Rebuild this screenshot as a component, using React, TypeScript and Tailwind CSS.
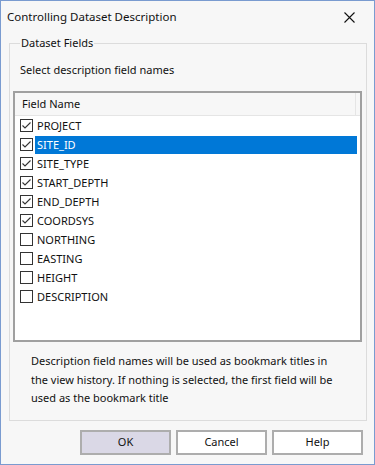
import React from "react";

const fields: { name: string; checked: boolean; selected?: boolean }[] = [
  { name: "PROJECT", checked: true },
  { name: "SITE_ID", checked: true, selected: true },
  { name: "SITE_TYPE", checked: true },
  { name: "START_DEPTH", checked: true },
  { name: "END_DEPTH", checked: true },
  { name: "COORDSYS", checked: true },
  { name: "NORTHING", checked: false },
  { name: "EASTING", checked: false },
  { name: "HEIGHT", checked: false },
  { name: "DESCRIPTION", checked: false },
];

function CheckBox({ checked }: { checked: boolean }) {
  return (
    <div className="w-[13px] h-[13px] border border-[#333333] bg-white flex items-center justify-center shrink-0">
      {checked && (
        <svg width="11" height="11" viewBox="0 0 11 11">
          <polyline points="1.5,5.5 4,8 9.5,2.5" fill="none" stroke="#333333" strokeWidth="1.1" />
        </svg>
      )}
    </div>
  );
}

function Button({ label, primary }: { label: string; primary?: boolean }) {
  return (
    <div
      className={`w-[91px] h-[25px] border-2 border-[#adadad] flex items-center justify-center text-[#111] ${
        primary ? "bg-[#dad8e6]" : "bg-white"
      }`}
    >
      {label}
    </div>
  );
}

export default function App() {
  return (
    <div
      className="w-[375px] h-[465px] border border-[#7a9bd0] bg-[#f7f7f7] flex flex-col text-[11px] text-[#111] leading-[16px]"
      style={{ fontFamily: '"Noto Sans", Arial, sans-serif' }}
    >
      <div className="h-[34px] flex items-center pl-[6px] pr-[19px] pb-[2px] shrink-0">
        <span className="flex-1 text-[11.5px]">Controlling Dataset Description</span>
        <svg width="11" height="11" viewBox="0 0 11 11">
          <path d="M0.5 0.5 L10.5 10.5 M10.5 0.5 L0.5 10.5" stroke="#111" strokeWidth="1.1" />
        </svg>
      </div>

      <fieldset className="ml-[8px] mr-[7px] border border-[#dcdcdc] flex flex-col pb-[12px] min-w-0">
        <legend className="ml-[10px] px-[1px]">Dataset Fields</legend>
        <div className="pl-[10px] mt-[11px]">Select description field names</div>
        <div className="ml-[3px] mr-[4px] mt-[13px] h-[251px] border-2 border-[#a0a0a0] bg-white flex flex-col">
          <div className="h-[23px] flex border-b border-[#e5e5e5] bg-[#f7f7f7]">
            <div className="flex-1 pl-[7px] flex items-center border-r border-[#e5e5e5]">Field Name</div>
            <div className="w-[4px]" />
          </div>
          <div className="flex flex-col">
            {fields.map((f) => (
              <div key={f.name} className="h-[19px] flex items-center pl-[5px] pr-[3px]">
                <CheckBox checked={f.checked} />
                <div
                  className={`ml-[2px] flex-1 h-[18px] flex items-center pl-[2px] ${
                    f.selected ? "bg-[#0078d7] text-white" : ""
                  }`}
                >
                  {f.name}
                </div>
              </div>
            ))}
          </div>
        </div>
        <div className="ml-[21px] mt-[10px] leading-[18.5px]">
          Description field names will be used as bookmark titles in
          <br />
          the view history. If nothing is selected, the first field will be
          <br />
          used as the bookmark title
        </div>
      </fieldset>

      <div className="flex justify-end gap-[5px] pr-[11px] mt-[9px]">
        <Button label="OK" primary />
        <Button label="Cancel" />
        <Button label="Help" />
      </div>
    </div>
  );
}
